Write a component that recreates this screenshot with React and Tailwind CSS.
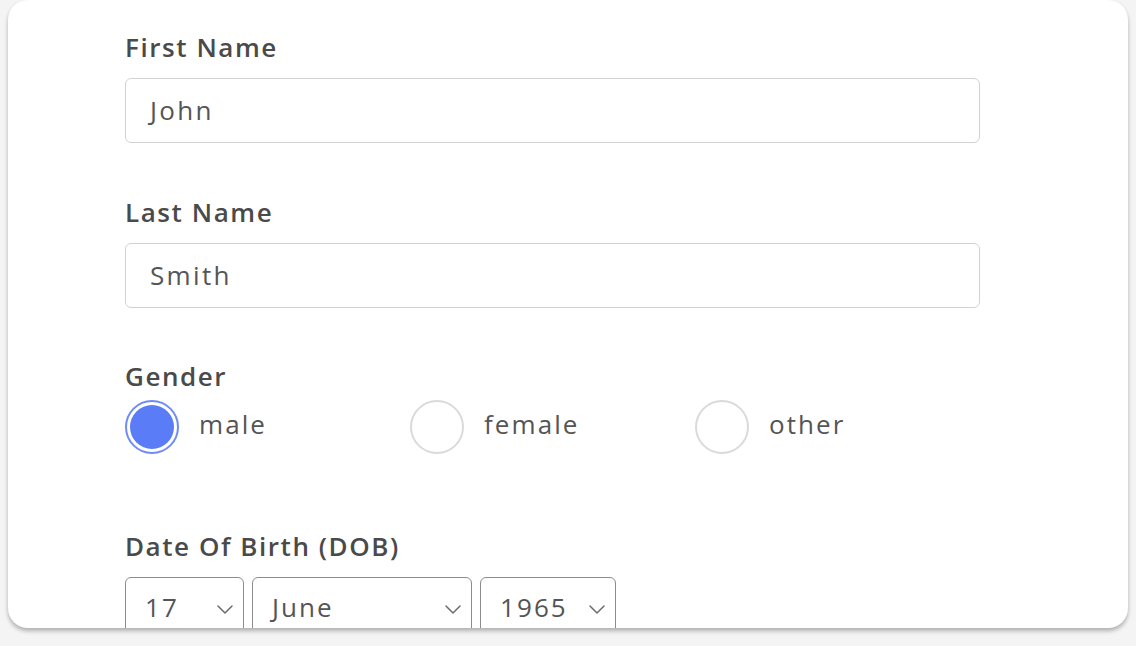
import React, { useState } from 'react';

const font = { fontFamily: '"Open Sans", "Noto Sans", sans-serif' };

const Chevron = () => (
  <svg width="16" height="9" viewBox="0 0 16 9" fill="none" className="shrink-0">
    <path d="M1 1l7 7 7-7" stroke="#6b6b6b" strokeWidth="1.5" strokeLinecap="round" strokeLinejoin="round" />
  </svg>
);

const Label = ({ children, className = '' }) => (
  <div className={`text-[26px] leading-[34px] font-semibold text-[#4a4a4a] tracking-[0.06em] ${className}`}>
    {children}
  </div>
);

const TextField = ({ value }) => (
  <div className="h-[65px] w-full rounded-[6px] border-[1.5px] border-[#d2d2d2] flex items-center pl-[24px] text-[26px] text-[#555] tracking-[0.09em]">
    {value}
  </div>
);

const Radio = ({ label, checked, onClick }) => (
  <div className="w-[285px] flex items-center gap-[20px] cursor-pointer" onClick={onClick}>
    {checked ? (
      <div className="w-[54px] h-[54px] rounded-full border-2 border-[#6f8bf6] p-[3px]">
        <div className="w-full h-full rounded-full bg-[#5a7cf7]" />
      </div>
    ) : (
      <div className="w-[54px] h-[54px] rounded-full border-2 border-[#dadada] bg-white" />
    )}
    <span className="pb-[6px] text-[26px] text-[#555] tracking-[0.08em]">{label}</span>
  </div>
);

const SelectBox = ({ value, width }) => (
  <div className={`${width} h-[70px] rounded-[6px] border-[1.5px] border-[#8c8c8c] flex items-start justify-between pl-[19px] pr-[10px] pt-[12px] text-[26px] text-[#555] tracking-[0.08em]`}>
    <span className="leading-[34px]">{value}</span>
    <div className="pt-[15px]">
      <Chevron />
    </div>
  </div>
);

export default function App() {
  const [gender, setGender] = useState('male');

  return (
    <div className="w-[1136px] h-[646px] bg-[#f4f4f4] px-2 overflow-hidden" style={font}>
      <div className="h-[628px] bg-white rounded-[20px] shadow-[0_3px_4px_rgba(0,0,0,0.28)] overflow-hidden pl-[117px] pt-[30px]">
        <div className="w-[855px]">
          {/* First name */}
          <Label className="mb-[14px]">First Name</Label>
          <TextField value="John" />

          {/* Last name */}
          <Label className="mt-[52px] mb-[14px]">Last Name</Label>
          <TextField value="Smith" />

          {/* Gender */}
          <Label className="mt-[51px]">Gender</Label>
          <div className="mt-[7px] flex">
            {['male', 'female', 'other'].map((g) => (
              <Radio key={g} label={g} checked={gender === g} onClick={() => setGender(g)} />
            ))}
          </div>

          {/* DOB */}
          <Label className="mt-[75px]">Date Of Birth (DOB)</Label>
          <div className="mt-[14px] flex gap-[8px]">
            <SelectBox value="17" width="w-[119px]" />
            <SelectBox value="June" width="w-[220px]" />
            <SelectBox value="1965" width="w-[136px]" />
          </div>
        </div>
      </div>
    </div>
  );
}
